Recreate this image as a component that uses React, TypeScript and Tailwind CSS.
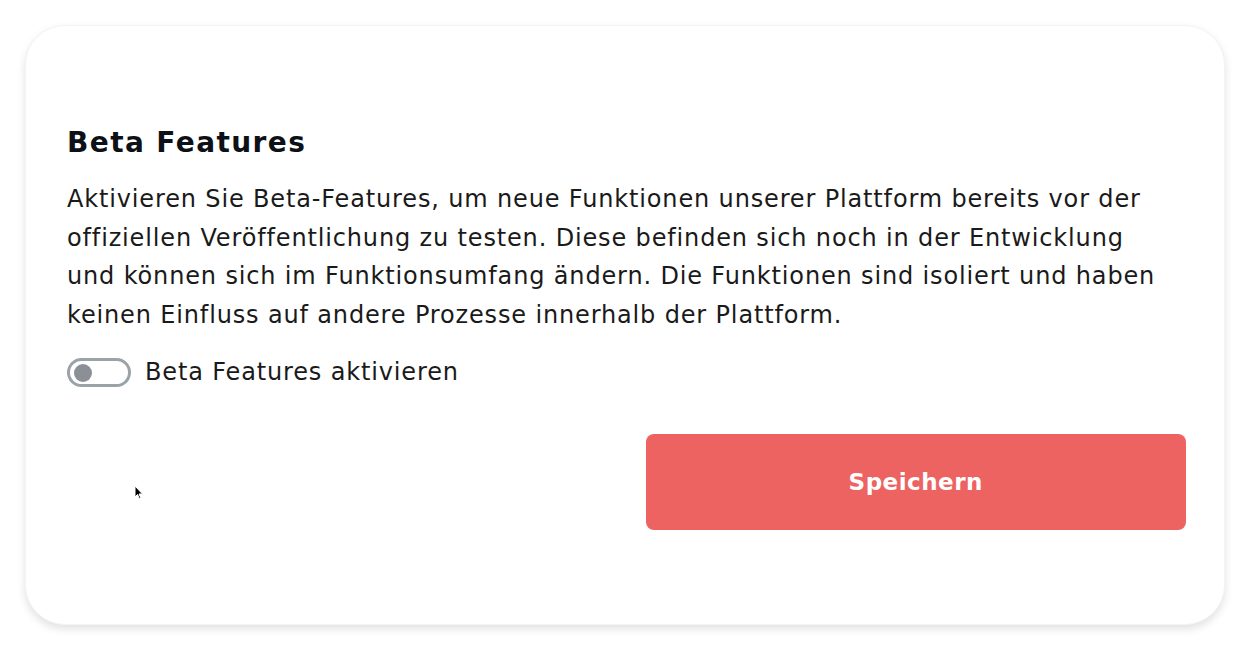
import React from 'react';

export default function App() {
  return (
    <div className="w-[1250px] h-[650px] bg-white p-[25px] font-['DejaVu_Sans',sans-serif] relative">
      <div className="h-[600px] rounded-[40px] bg-white border border-gray-100 shadow-[0_4px_8px_rgba(0,0,0,0.12)] pl-[41px] pr-[38px] pt-[99px]">
        <h2 className="text-[28px] font-bold text-[#0d1117] leading-[36px] tracking-[1.4px]">Beta Features</h2>
        <p className="mt-[19px] text-[24px] leading-[38.5px] tracking-[0.85px] text-[#1a1a1a] whitespace-nowrap">
          Aktivieren Sie Beta-Features, um neue Funktionen unserer Plattform bereits vor der
          <br />
          offiziellen Veröffentlichung zu testen. Diese befinden sich noch in der Entwicklung
          <br />
          und können sich im Funktionsumfang ändern. Die Funktionen sind isoliert und haben
          <br />
          keinen Einfluss auf andere Prozesse innerhalb der Plattform.
        </p>
        <label className="mt-[24px] flex items-center gap-[14px] text-[24px] leading-[29px] tracking-[0.85px] text-[#1a1a1a]">
          <span className="w-[64px] h-[29px] rounded-full border-[3px] border-[#9aa3a8] bg-white flex items-center pl-[4px]">
            <span className="w-[18px] h-[18px] rounded-full bg-[#8a9096]" />
          </span>
          Beta Features aktivieren
        </label>
        <div className="mt-[47px] grid grid-cols-2 gap-[38px]">
          <div />
          <button className="h-[96px] rounded-[8px] bg-[#ec6362] text-white text-[23px] font-bold tracking-[0.5px]">
            Speichern
          </button>
        </div>
      </div>
      <svg className="absolute left-[134px] top-[485px]" width="10" height="15" viewBox="0 0 10 15">
        <path d="M1 1 L1 12 L3.5 9.5 L5.5 14 L7 13.3 L5 9 L8.5 9 Z" fill="#000" stroke="#fff" strokeWidth="1" />
      </svg>
    </div>
  );
}
